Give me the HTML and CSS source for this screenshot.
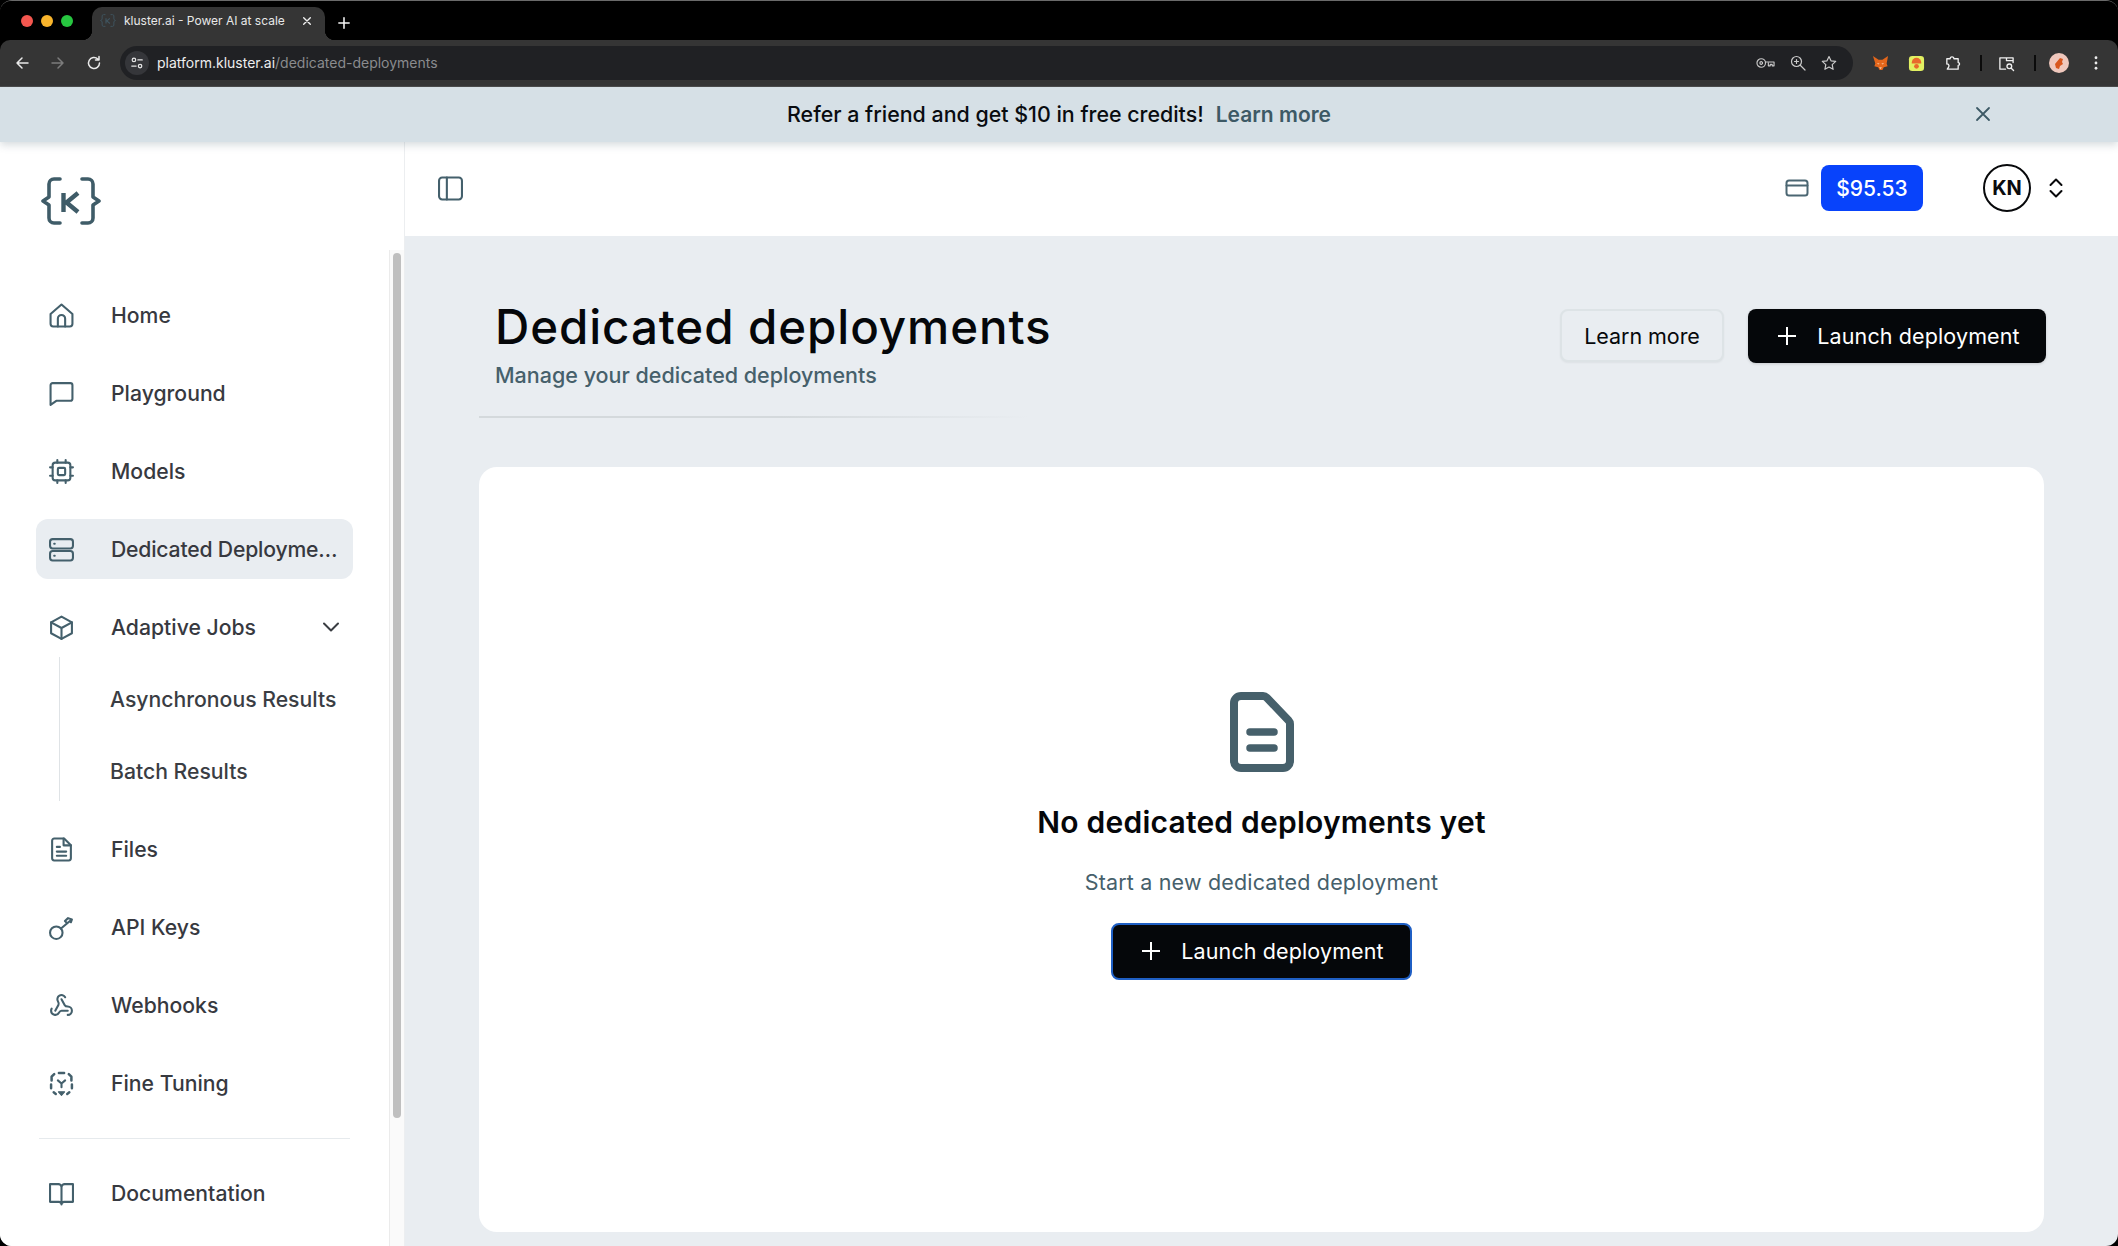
FILE: index.html
```html
<!DOCTYPE html>
<html lang="en">
<head>
<meta charset="utf-8">
<title>kluster.ai - Power AI at scale</title>
<link rel="stylesheet" href="styles.css">
</head>
<body>
<div class="window">
  <header class="tabstrip">
    <div class="lights"><span class="light red"></span><span class="light yellow"></span><span class="light green"></span></div>
    <div class="tab">
      <svg class="tab-fav" viewBox="0 0 60 48"><use href="#logo"/></svg>
      <span class="tab-title">kluster.ai - Power AI at scale</span>
      <svg class="tab-x" viewBox="0 0 12 12"><path d="M2 2l8 8M10 2l-8 8"/></svg>
    </div>
    <svg class="tab-plus" viewBox="0 0 14 14"><path d="M7 1v12M1 7h12"/></svg>
  </header>

  <div class="toolbar">
    <svg class="tb-ico" viewBox="0 0 16 16"><path d="M14 8H3M8 3L3 8l5 5"/></svg>
    <svg class="tb-ico dim" viewBox="0 0 16 16"><path d="M2 8h11M8 3l5 5-5 5"/></svg>
    <svg class="tb-ico" viewBox="0 0 16 16"><path d="M13.5 8a5.5 5.5 0 1 1-1.7-4M13 1.5V5H9.5"/></svg>
    <div class="omnibox">
      <span class="site-btn"><svg viewBox="0 0 16 16"><circle cx="4.5" cy="4.5" r="2"/><path d="M9 4.5h5M2 11.5h5"/><circle cx="11.5" cy="11.5" r="2"/></svg></span>
      <span class="url"><span class="url-host">platform.kluster.ai</span><span class="url-path">/dedicated-deployments</span></span>
      <span class="omni-actions">
        <svg class="omni-ico wide" viewBox="0 0 20 12"><circle cx="5.5" cy="6" r="4.5"/><circle cx="5.5" cy="6" r="1.4"/><path d="M10 5h9v4h-2V7.500h-2V9h-2V6"/></svg>
        <svg class="omni-ico" viewBox="0 0 16 16"><circle cx="6.500" cy="6.500" r="5"/><path d="M10.500 10.500L15 15M4.500 6.500h4M6.500 4.500v4"/></svg>
        <svg class="omni-ico" viewBox="0 0 16 16"><path d="M8 1.500l2 4.300 4.700.6-3.500 3.200.9 4.700L8 12l-4.100 2.300.9-4.700L1.300 6.400 6 5.800z"/></svg>
      </span>
    </div>
    <div class="ext-row">
      <svg class="ext" viewBox="0 0 18 18"><path class="fox-a" d="M1 1l6 4h4l6-4-1.500 8 1 3-4 1-1.500 3h-3L6.500 13l-4-1 1-3z"/><path class="fox-b" d="M7 10l-2-1.500 3 .5zM11 10l2-1.500-3 .5zM7.500 13h3L9 15z"/></svg>
      <svg class="ext" viewBox="0 0 18 18"><rect class="hat-bg" x="1" y="1" width="16" height="16" rx="3.500"/><path class="hat" d="M4 8a5 5 0 0 1 10 0v1H4z"/><circle class="hat" cx="9" cy="12" r="2.500"/></svg>
      <svg class="ext line" viewBox="0 0 18 18"><path d="M3 4h3.500a2 2 0 0 1 4 0H15v4a1.500 1.500 0 0 1 0 3v4H3.500L5 12.500a2 2 0 0 0-2-3z"/></svg>
      <span class="ext-sep"></span>
      <svg class="ext line" viewBox="0 0 18 18"><path d="M16 8V3H2v12h6M9 3h7v3H9z"/><circle cx="12" cy="12" r="2.500"/><path d="M14 14l2.500 2.500"/></svg>
      <span class="ext-sep"></span>
      <svg class="ext avatar-ext" viewBox="0 0 20 20"><circle class="pf-bg" cx="10" cy="10" r="10"/><path class="pf" d="M6 11l5-6 3 1-1 3 1 2-3 2-1 3-3-1z"/></svg>
      <svg class="ext dots" viewBox="0 0 4 16"><circle cx="2" cy="2" r="1.600"/><circle cx="2" cy="8" r="1.600"/><circle cx="2" cy="14" r="1.600"/></svg>
    </div>
  </div>

  <div class="banner">
    <p class="banner-text">Refer a friend and get $10 in free credits!<a class="banner-link">Learn more</a></p>
    <svg class="banner-x" viewBox="0 0 16 16"><path d="M2 2l12 12M14 2L2 14"/></svg>
  </div>

  <div class="app">
    <aside class="sidebar">
      <div class="logo-wrap">
        <svg class="logo" viewBox="0 0 60 48">
          <g id="logo">
            <path d="M19 2h-6a5 5 0 0 0-5 5v13l-6 4 6 4v13a5 5 0 0 0 5 5h6"/>
            <path d="M41 2h6a5 5 0 0 1 5 5v13l6 4-6 4v13a5 5 0 0 1-5 5h-6"/>
            <path class="logo-k" d="M22.500 16v19M22.500 25.500h3L37 16M25.500 25.500L37 35"/>
          </g>
        </svg>
      </div>
      <div class="side-scroll">
        <nav class="nav">
          <a class="nav-item"><svg class="ico" viewBox="0 0 24 24"><path d="M1.500 10.500L12 1.500l10.500 9V20a2.500 2.500 0 0 1-2.500 2.500H4A2.500 2.500 0 0 1 1.500 20z"/><path d="M8.500 22.500V15a3.500 3.500 0 0 1 7 0v7.500"/></svg><span class="nav-label">Home</span></a>
          <a class="nav-item"><svg class="ico" viewBox="0 0 24 24"><path d="M3.500 2h17A2 2 0 0 1 22.500 4v13a2 2 0 0 1-2 2H7l-5.500 4V4a2 2 0 0 1 2-2z"/></svg><span class="nav-label">Playground</span></a>
          <a class="nav-item"><svg class="ico" viewBox="0 0 24 24"><rect x="3.500" y="3.500" width="17" height="17" rx="2.500"/><rect x="8.500" y="8.500" width="7" height="7" rx="1"/><path d="M8 1v2.500M16 1v2.500M8 20.500V23M16 20.500V23M1 8h2.500M1 16h2.500M20.500 8H23M20.500 16H23"/></svg><span class="nav-label">Models</span></a>
          <a class="nav-item active"><svg class="ico" viewBox="0 0 24 24"><rect x="1" y="2" width="22" height="9" rx="2.500"/><rect x="1" y="13.500" width="22" height="9" rx="2.500"/><path d="M5 6.500h.5M5 18h.5"/></svg><span class="nav-label">Dedicated Deployments</span></a>
          <a class="nav-item"><svg class="ico" viewBox="0 0 24 24"><path d="M12 1.500l10 5.500v10.500l-10 5.500-10-5.500V7z"/><path d="M2 7l10 5.500L22 7M12 12.500V23"/></svg><span class="nav-label">Adaptive Jobs</span><svg class="chev" viewBox="0 0 16 10"><path d="M1 1.500l7 7 7-7"/></svg></a>
          <div class="subnav">
            <a class="sub-item">Asynchronous Results</a>
            <a class="sub-item">Batch Results</a>
          </div>
          <a class="nav-item"><svg class="ico" viewBox="0 0 24 24"><path d="M5 1.500h9.500l6.500 6.500v12.500a2 2 0 0 1-2 2H5a2 2 0 0 1-2-2v-17a2 2 0 0 1 2-2z"/><path d="M14 1.500V8h7M7.500 9.500h3M7.500 14h9M7.500 18h9"/></svg><span class="nav-label">Files</span></a>
          <a class="nav-item"><svg class="ico" viewBox="0 0 24 24"><circle cx="7" cy="17" r="6"/><path d="M11.500 13L21 5M17.500 8l-2.200-2.200 3-2.800 3.700 1.300-1 2.700"/></svg><span class="nav-label">API Keys</span></a>
          <a class="nav-item"><svg class="ico" viewBox="0 0 24 24"><path d="M18 16.980h-5.990c-1.100 0-1.950.94-2.480 1.900A4 4 0 0 1 2 17c.01-.7.2-1.400.57-2"/><path d="M6 17l3.130-5.780c.53-.97.1-2.180-.5-3.100a4 4 0 1 1 6.890-4.060"/><path d="M12 6l3.130 5.730C15.660 12.700 16.900 13 18 13a4 4 0 0 1 0 8"/></svg><span class="nav-label">Webhooks</span></a>
          <a class="nav-item"><svg class="ico" viewBox="0 0 24 24"><path class="dash" d="M9.500 2h5M2.500 9V5.500L5 3M21.500 9V5.500L19 3M2 13v3.500M22 13v3.500M4.500 20.500L6.500 22M19.500 20.500L17.500 22"/><path d="M8.500 9l3.500 3 3.500-3M12 12v3.500"/><path class="fill-ico" d="M9 20h6l-3 3.500z"/></svg><span class="nav-label">Fine Tuning</span></a>
          <hr class="nav-rule">
          <a class="nav-item"><svg class="ico" viewBox="0 0 24 24"><path d="M12 5.500v17M1 3h8a3 3 0 0 1 3 3 3 3 0 0 1 3-3h8v17h-8.500a2.500 2.500 0 0 0-2.500 2.500A2.500 2.500 0 0 0 9.500 20H1z"/></svg><span class="nav-label">Documentation</span></a>
        </nav>
        <div class="scrollbar"><span class="thumb"></span></div>
      </div>
    </aside>

    <main class="main">
      <div class="topbar">
        <svg class="toggle" viewBox="0 0 24 24"><rect x="1" y="1.500" width="22" height="21" rx="3"/><path d="M8.500 1.500v21"/></svg>
        <span class="top-space"></span>
        <svg class="card-ico" viewBox="0 0 24 18"><rect x="1.500" y="1.500" width="21" height="15" rx="2.500"/><path d="M1.500 6.500h21"/></svg>
        <span class="balance">$95.53</span>
        <span class="avatar">KN</span>
        <svg class="updown" viewBox="0 0 14 20"><path d="M1.500 7L7 1.500 12.500 7M1.500 13L7 18.500 12.500 13"/></svg>
      </div>

      <div class="page">
        <div class="page-head">
          <div class="head-text">
            <h1 class="title">Dedicated deployments</h1>
            <p class="subtitle">Manage your dedicated deployments</p>
          </div>
          <div class="head-actions">
            <button class="btn btn-ghost">Learn more</button>
            <button class="btn btn-dark btn-launch"><svg class="plus" viewBox="0 0 20 20"><path d="M10 1v18M1 10h18"/></svg>Launch deployment</button>
          </div>
        </div>
        <div class="head-rule"></div>

        <section class="card">
          <svg class="empty-ico" viewBox="0 0 64 80"><path d="M11 4h22a5 5 0 0 1 3.600 1.500l22 23A5 5 0 0 1 60 32v37a7 7 0 0 1-7 7H11a7 7 0 0 1-7-7V11a7 7 0 0 1 7-7z"/><path d="M20 40h24M20 56h24" class="empty-lines"/></svg>
          <h2 class="empty-title">No dedicated deployments yet</h2>
          <p class="empty-sub">Start a new dedicated deployment</p>
          <button class="btn btn-dark btn-empty"><svg class="plus" viewBox="0 0 20 20"><path d="M10 1v18M1 10h18"/></svg>Launch deployment</button>
        </section>
      </div>
    </main>
  </div>
</div>
</body>
</html>
```

FILE: styles.css
```css
* { box-sizing: border-box; }
html, body { margin: 0; height: 100%; background: #000; }
body { font-family: Inter, "Liberation Sans", sans-serif; overflow: hidden; }
p, h1, h2 { margin: 0; }
svg { display: block; flex: none; fill: none; stroke-linecap: round; stroke-linejoin: round; }

.window { width: 2118px; height: 1246px; display: flex; flex-direction: column; background: #000; border-radius: 12px; overflow: hidden; border-top: 1px solid #6a6a6a; }

/* browser chrome */
.tabstrip { height: 39px; display: flex; align-items: flex-end; background: #000; flex: none; }
.lights { display: flex; gap: 8px; width: 92px; padding: 0 0 13px 21px; }
.light { width: 12px; height: 12px; border-radius: 50%; }
.red { background: #f4574f; }
.yellow { background: #f9b52c; }
.green { background: #27c640; }
.tab { position: relative; width: 233px; height: 33px; background: #353535; border-radius: 10px 10px 0 0; display: flex; align-items: center; padding: 0 0 6px 8px; }
.tab::before, .tab::after { content: ""; position: absolute; bottom: 0; width: 10px; height: 10px; }
.tab::before { left: -10px; background: radial-gradient(circle at 0 0, #000 10px, #353535 10.5px); }
.tab::after { right: -10px; background: radial-gradient(circle at 100% 0, #000 10px, #353535 10.5px); }
.tab-fav { width: 16px; height: 13px; stroke: #3f5560; stroke-width: 3.5; }
.tab-title { margin-left: 8px; font-size: 12px; color: #e8e8e8; white-space: nowrap; width: 172px; }
.tab-x { width: 10px; height: 10px; stroke: #f0f0f0; stroke-width: 1.6; margin-left: 6px; }
.tab-plus { width: 12px; height: 12px; stroke: #f5f5f5; stroke-width: 1.8; margin: 0 0 11px 13px; }

.toolbar { height: 47px; flex: none; background: #353535; border-radius: 10px 10px 0 0; border-bottom: 1px solid #4a4a4a; display: flex; align-items: center; padding: 0 0 0 14px; }
.tb-ico { width: 16px; height: 16px; stroke: #e9e9e9; stroke-width: 1.5; margin-right: 20px; }
.tb-ico.dim { stroke: #7c7c7c; }
.tb-ico:nth-child(3) { margin-right: 18px; }
.omnibox { width: 1733px; height: 34px; background: #202124; border-radius: 17px; display: flex; align-items: center; padding: 0 16px 0 5px; }
.site-btn { width: 24px; height: 24px; border-radius: 50%; background: #35363a; display: flex; align-items: center; justify-content: center; }
.site-btn svg { width: 14px; height: 14px; stroke: #e6e6e6; stroke-width: 1.4; }
.url { margin-left: 8px; font-size: 14px; line-height: 17px; padding-bottom: 2px; white-space: nowrap; flex: 1; }
.url-host { color: #eeeeee; }
.url-path { color: #8a8b8e; }
.omni-actions { display: flex; align-items: center; gap: 15px; }
.omni-ico { width: 16px; height: 16px; stroke: #c9c9c9; stroke-width: 1.2; }
.omni-ico.wide { width: 19px; height: 12px; }
.ext-row { flex: 1; display: flex; align-items: center; padding-left: 19px; }
.ext { width: 17px; height: 17px; margin-right: 19px; }
.fox-a { fill: #e4661b; }
.fox-b { fill: #f6c9a4; }
.hat-bg { fill: #e2f062; }
.hat { fill: #e8692c; }
.ext.line { stroke: #f0f0f0; stroke-width: 1.4; }
.ext-sep { width: 2px; height: 16px; background: #0b0b0b; margin: 0 16px 0 0; }
.avatar-ext { width: 20px; height: 20px; margin-left: -3px; margin-right: 25px; }
.pf-bg { fill: #f0c8bd; }
.pf { fill: #d9571e; }
.dots { width: 4px; height: 14px; fill: #ececec; margin: 0; }

.banner { position: relative; z-index: 2; height: 55px; flex: none; background: #d6e0e6; box-shadow: 0 3px 8px rgba(70, 90, 105, .22); display: flex; align-items: center; justify-content: center; padding-bottom: 2px; }
.banner-text { font-size: 21.4px; font-weight: 500; color: #090c10; white-space: nowrap; }
.banner-link { margin-left: 12px; color: #3d5965; font-weight: 600; font-size: 21px; }
.banner-x { position: absolute; left: 1975px; top: 19px; width: 16px; height: 16px; stroke: #3d5965; stroke-width: 1.800; }

/* app */
.app { flex: 1; display: flex; min-height: 0; background: #e9edf1; }
.sidebar { width: 405px; flex: none; background: #fff; display: flex; flex-direction: column; border-right: 1px solid #eceef0; overflow: hidden; }
.logo-wrap { height: 108px; padding: 35px 0 0 41px; flex: none; }
.logo { width: 60px; height: 48px; stroke: #3f5c68; stroke-width: 3.600; }
.logo-k { stroke-width: 4.400; stroke-linecap: butt; stroke-linejoin: miter; }
.side-scroll { flex: 1; display: flex; min-height: 0; }
.nav { width: 389px; padding: 35px 36px 0; display: flex; flex-direction: column; gap: 18px; }
.nav-item { height: 60px; flex: none; display: flex; align-items: center; padding: 0 14px 0 13px; border-radius: 12px; font-size: 21.2px; font-weight: 500; color: #37393f; }
.nav-item.active { background: #e9edf1; padding-right: 12px; letter-spacing: -.2px; }
.ico { width: 25px; height: 25px; stroke: #44606c; stroke-width: 2; }
.dash { stroke-width: 2.400; }
.fill-ico { fill: #44606c; stroke-width: 1; }
.nav-label { margin-left: 37px; white-space: nowrap; overflow: hidden; text-overflow: ellipsis; flex: 1; min-width: 0; }
.chev { width: 16px; height: 10px; stroke: #3a3d42; stroke-width: 2; }
.subnav { height: 144px; flex: none; margin: -18px 0 0 23px; padding: 6px 0 0 50px; border-left: 1px solid #dfe3e6; }
.sub-item { height: 72px; display: flex; align-items: center; font-size: 21.2px; font-weight: 500; color: #3a3d43; white-space: nowrap; }
.nav-rule { width: 311px; margin: 7px 0 6px 3px; border: 0; border-top: 1px solid #e6eaed; flex: none; }
.scrollbar { width: 15px; flex: none; background: #fafafa; border-left: 1px solid #ebebeb; padding: 3px 3px 0 3px; }
.thumb { display: block; width: 8px; height: 865px; border-radius: 4px; background: #bfbfbf; }

.main { flex: 1; min-width: 0; display: flex; flex-direction: column; }
.topbar { height: 94px; flex: none; background: #fff; display: flex; align-items: center; padding: 0 55px 2px 33px; }
.toggle { width: 25px; height: 25px; stroke: #44606c; stroke-width: 2; }
.top-space { flex: 1; }
.card-ico { width: 24px; height: 18px; stroke: #4b6672; stroke-width: 2; margin-right: 12px; }
.balance { width: 102px; height: 46px; border-radius: 8px; background: #0843fb; color: #fff; font-size: 21px; font-weight: 500; display: flex; align-items: center; justify-content: center; }
.avatar { width: 48px; height: 48px; border-radius: 50%; border: 2px solid #08090b; margin-left: 60px; font-size: 20px; font-weight: 700; color: #0a0b0e; display: flex; align-items: center; justify-content: center; }
.updown { width: 14px; height: 20px; stroke: #08090b; stroke-width: 2; margin-left: 18px; }

.page { flex: 1; min-height: 0; display: flex; flex-direction: column; padding: 0 74px 14px 74px; }
.page-head { display: flex; justify-content: space-between; padding: 63px 0 27px 16px; }
.title { font-size: 47.5px; line-height: 56px; font-weight: 500; color: #05070a; letter-spacing: .9px; white-space: nowrap; }
.subtitle { margin-top: 6px; font-size: 21.5px; line-height: 28px; font-weight: 500; color: #46606b; white-space: nowrap; }
.head-actions { display: flex; align-items: flex-start; gap: 24px; margin: 10px -2px 0 0; }
.btn { font: inherit; font-size: 21.5px; font-weight: 400; display: flex; align-items: center; justify-content: center; cursor: pointer; border-radius: 8px; white-space: nowrap; letter-spacing: .12px; }
.btn-ghost { width: 164px; height: 53px; background: #e9edf1; border: 2px solid #dde3e6; color: #06080b; box-shadow: 0 1px 2px rgba(0, 0, 0, .05); letter-spacing: -.05px; }
.btn-dark { background: #05070a; color: #fff; border: 0; }
.btn-launch { width: 298px; height: 54px; box-shadow: 0 1px 3px rgba(0, 0, 0, .15); padding: 0 6px 0 9px; }
.plus { width: 20px; height: 20px; stroke: #fff; stroke-width: 2; margin-right: 20px; stroke-linecap: butt; }
.head-rule { height: 2px; flex: none; width: 550px; background: linear-gradient(90deg, #d4d9dc 0%, #d4d9dc 55%, rgba(212, 217, 220, 0) 100%); }
.card { flex: 1; margin-top: 49px; background: #fff; border-radius: 18px; display: flex; flex-direction: column; align-items: center; padding-top: 225px; }
.empty-ico { width: 64px; height: 80px; stroke: #46606b; stroke-width: 8; }
.empty-lines { stroke-width: 7.500; }
.empty-title { margin-top: 30px; font-size: 30px; line-height: 40px; font-weight: 600; color: #05070a; white-space: nowrap; letter-spacing: .22px; }
.empty-sub { margin-top: 26px; font-size: 21.5px; line-height: 28px; color: #46606b; white-space: nowrap; letter-spacing: .17px; }
.btn-empty { width: 301px; height: 57px; margin-top: 27px; border: 2px solid #1f5fc4; padding: 0 0 1px 2px; }
```
